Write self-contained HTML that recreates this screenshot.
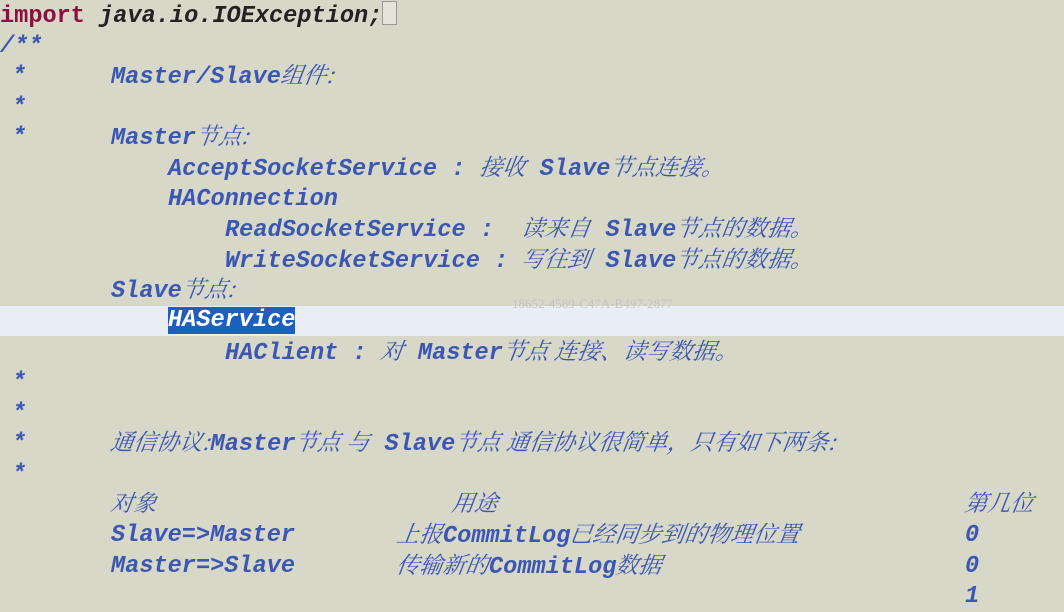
<!DOCTYPE html>
<html><head><meta charset="utf-8"><style>
html,body{margin:0;padding:0;}
body{width:1064px;height:604px;background:#d8d8c9;position:relative;overflow:hidden;
font-family:"Liberation Mono",monospace;font-weight:bold;font-style:italic;font-size:23.6px;color:#3b57b3;}
.l{position:absolute;white-space:pre;line-height:30px;height:30px;}
.c{font-family:"Noto Serif CJK SC","Noto Sans CJK SC",serif;font-weight:normal;font-style:italic;font-size:23px;line-height:1;display:inline-block;transform:skewX(-8deg);}
.hl{position:absolute;left:0;top:306px;width:1064px;height:30px;background:#e8edf6;}
.sel{background:#1d5fbe;color:#fff;}
.k{color:#8b1040;font-style:normal;}
.b{color:#222;}
.wm{position:absolute;left:512px;top:296px;font-family:"Liberation Serif",serif;font-style:normal;font-weight:normal;font-size:13px;color:#c4c4c4;}
</style></head><body>
<div class="hl"></div>
<div class="wm">18652-4589-C47A-B497-2877</div>
<div class="l" style="left:0;top:1px"><span class="k">import</span> <span class="b">java.io.IOException;</span><span style="display:inline-block;width:13px;height:22px;border:1px solid #999;background:#e4e4d8;vertical-align:-3px"></span></div>
<div class="l" style="left:0;top:32px">/**</div>
<div class="l" style="left:12px;top:62px">*</div>
<div class="l" style="left:111px;top:62px">Master/Slave<span class="c">组件:</span></div>
<div class="l" style="left:12px;top:93px">*</div>
<div class="l" style="left:12px;top:123px">*</div>
<div class="l" style="left:111px;top:123px">Master<span class="c">节点:</span></div>
<div class="l" style="left:168px;top:154px">AcceptSocketService : <span class="c">接收</span> Slave<span class="c">节点连接。</span></div>
<div class="l" style="left:168px;top:185px">HAConnection</div>
<div class="l" style="left:225px;top:215px">ReadSocketService :  <span class="c">读来自</span> Slave<span class="c">节点的数据。</span></div>
<div class="l" style="left:225px;top:246px">WriteSocketService : <span class="c">写往到</span> Slave<span class="c">节点的数据。</span></div>
<div class="l" style="left:111px;top:276px">Slave<span class="c">节点:</span></div>
<div class="l" style="left:168px;top:306px"><span class="sel">HAService</span></div>
<div class="l" style="left:225px;top:338px">HAClient : <span class="c">对</span> Master<span class="c">节点 连接、读写数据。</span></div>
<div class="l" style="left:12px;top:368px">*</div>
<div class="l" style="left:12px;top:399px">*</div>
<div class="l" style="left:12px;top:429px">*</div>
<div class="l" style="left:111px;top:429px"><span class="c">通信协议:</span>Master<span class="c">节点 与</span> Slave<span class="c">节点 通信协议很简单，只有如下两条:</span></div>
<div class="l" style="left:12px;top:460px">*</div>
<div class="l" style="left:111px;top:490px"><span class="c">对象</span></div>
<div class="l" style="left:452px;top:490px"><span class="c">用途</span></div>
<div class="l" style="left:965px;top:490px"><span class="c">第几位</span></div>
<div class="l" style="left:111px;top:521px">Slave=&gt;Master</div>
<div class="l" style="left:397px;top:521px"><span class="c">上报</span>CommitLog<span class="c">已经同步到的物理位置</span></div>
<div class="l" style="left:965px;top:521px">0</div>
<div class="l" style="left:111px;top:552px">Master=&gt;Slave</div>
<div class="l" style="left:397px;top:552px"><span class="c">传输新的</span>CommitLog<span class="c">数据</span></div>
<div class="l" style="left:965px;top:552px">0</div>
<div class="l" style="left:965px;top:582px">1</div>
</body></html>
